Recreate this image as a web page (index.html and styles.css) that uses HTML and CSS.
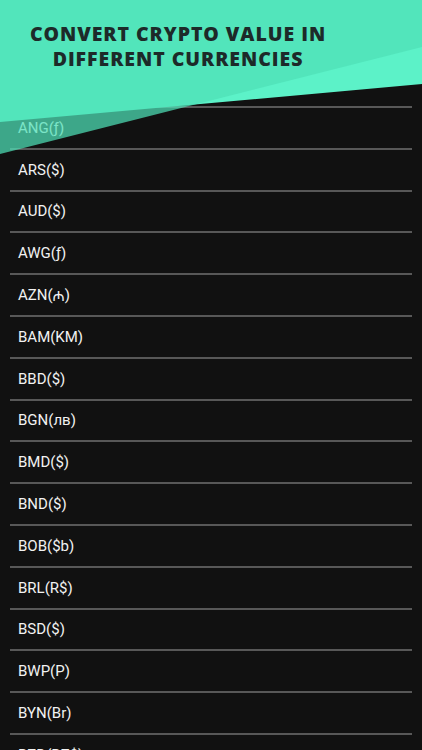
FILE: index.html
```html
<!DOCTYPE html>
<html lang="en">
<head>
<meta charset="utf-8">
<title>Currencies</title>
<link rel="stylesheet" href="styles.css">
</head>
<body>
<div class="screen">
  <div class="hero">
    <svg class="hero-bg" width="422" height="160" viewBox="0 0 422 160" aria-hidden="true">
      <polygon points="0,0 422,0 422,84 0,122" fill="#5cf2c8"/>
      <polygon points="0,0 422,0 422,47 0,154" fill="rgba(78,223,182,0.73)"/>
    </svg>
    <h1 class="hero-title">CONVERT CRYPTO VALUE IN<br>DIFFERENT CURRENCIES</h1>
  </div>
  <ul class="list">
    <li class="row">ANG(ƒ)</li>
    <li class="row">ARS($)</li>
    <li class="row">AUD($)</li>
    <li class="row">AWG(ƒ)</li>
    <li class="row">AZN(<span class="sym">₼</span>)</li>
    <li class="row">BAM(KM)</li>
    <li class="row">BBD($)</li>
    <li class="row">BGN(лв)</li>
    <li class="row">BMD($)</li>
    <li class="row">BND($)</li>
    <li class="row">BOB($b)</li>
    <li class="row">BRL(R$)</li>
    <li class="row">BSD($)</li>
    <li class="row">BWP(P)</li>
    <li class="row">BYN(Br)</li>
    <li class="row">BZD(BZ$)</li>
  </ul>
</div>
</body>
</html>
```
FILE: styles.css
```css
html, body {
  margin: 0;
  padding: 0;
  background: #111111;
}
.screen {
  position: relative;
  width: 422px;
  height: 750px;
  overflow: hidden;
  background: #111111;
}
.hero {
  position: absolute;
  top: 0;
  left: 0;
  width: 422px;
  height: 160px;
  z-index: 2;
  pointer-events: none;
}
.hero-bg {
  position: absolute;
  top: 0;
  left: 0;
  display: block;
}
.hero-title {
  position: relative;
  margin: 0;
  padding: 21px 0 0 0;
  width: 356px;
  text-align: center;
  font-family: "Open Sans", sans-serif;
  font-weight: 800;
  font-size: 19.5px;
  line-height: 25px;
  letter-spacing: 0.95px;
  color: #1d2a29;
}
.list {
  list-style: none;
  margin: 0;
  padding: 106px 10px 0 10px;
}
.row {
  box-sizing: border-box;
  height: 41.8px;
  display: flex;
  align-items: center;
  padding-left: 8px;
  border-top: 2px solid #585858;
  font-family: Roboto, sans-serif;
  font-size: 15px;
  color: #f2f2f2;
}
.sym {
  font-family: "Noto Sans", "Liberation Sans", sans-serif;
  font-size: 15px;
}
```
